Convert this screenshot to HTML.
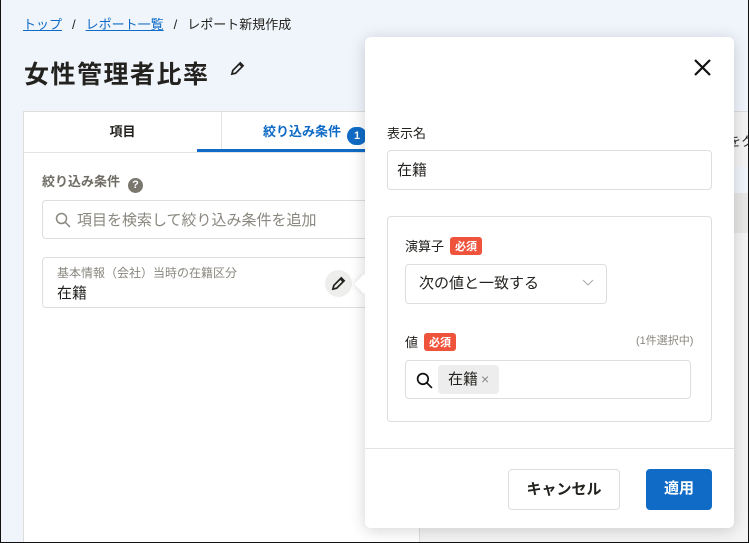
<!DOCTYPE html>
<html style="width:749px;height:543px;overflow:hidden"><head><meta charset="utf-8"><style>
*{box-sizing:border-box;margin:0;padding:0}
body{width:749px;height:543px;overflow:hidden;background:#f0f5fc;font-family:"Liberation Sans","Noto Sans CJK JP",sans-serif;color:#23221e;position:relative}
.frame{position:absolute;left:0;top:0;width:749px;height:543px;border:1px solid #111;border-top:none;pointer-events:none;z-index:50}
.bc{position:absolute;left:23px;top:14px;font-size:13px;color:#23221e;white-space:nowrap}
.bc a{color:#0f6bc5;text-decoration:underline}
.bc span.s{margin:0 10px}
h1{position:absolute;left:24px;top:55px;font-size:25px;font-weight:bold;letter-spacing:1.5px}
.pen{position:absolute}
.left{position:absolute;left:23px;top:111px;width:397px;height:432px;background:#fff;border:1px solid #dedede;border-bottom:none}
.tabs{height:41px;border-bottom:1px solid #e3e3e3;position:relative}
.tab1{position:absolute;left:0;top:0;width:198px;height:40px;text-align:center;line-height:40px;font-weight:bold;font-size:13px;border-right:1px solid #e3e3e3}
.tab2{position:absolute;left:173px;top:0;width:230px;height:40px;line-height:40px;font-weight:bold;font-size:13px;color:#0f6bc5;border-bottom:3px solid #0f6bc5;padding-left:66px}
.badge{display:inline-block;width:20px;height:18px;border-radius:9px;background:#0f6bc5;vertical-align:-3px;margin-left:6px;color:#fff;font-size:11px;line-height:18px;text-align:center}
.sec{position:absolute;left:18px;top:59px;font-size:13px;color:#706d65;font-weight:bold}
.q{display:inline-block;width:15px;height:15px;border-radius:50%;background:#7a776f;color:#fff;font-size:11px;text-align:center;line-height:15px;margin-left:8px;vertical-align:-2px}
.search{position:absolute;left:18px;top:88px;width:370px;height:39px;border:1px solid #dedede;border-radius:4px;font-size:15px;color:#8a877f;line-height:39px;padding-left:34px}
.item{position:absolute;left:18px;top:145px;width:370px;height:51px;border:1px solid #dedede;border-radius:4px;padding:6px 14px}
.item .l{font-size:12px;color:#8a877f}
.item .v{font-size:15px;margin-top:1px}
.pbtn{position:absolute;left:282px;top:12px;width:27px;height:27px;border-radius:50%;background:#eeeeec}
.right{position:absolute;left:420px;top:111px;width:330px;height:432px;background:#f0f5fc}
.pop{position:absolute;left:365px;top:37px;width:369px;height:491px;background:#fff;border-radius:6px;box-shadow:0 2px 16px rgba(0,0,0,.18);z-index:10}
.arrow{position:absolute;left:357px;top:277px;width:14px;height:14px;background:#fff;transform:rotate(45deg);z-index:11;box-shadow:-2px 2px 4px rgba(0,0,0,.06)}
.lbl{position:absolute;font-size:13px;color:#23221e;white-space:nowrap}
.inp{position:absolute;border:1px solid #dedede;border-radius:4px;background:#fff}
.req{display:inline-block;background:#f0533c;color:#fff;font-size:11px;font-weight:bold;padding:1px 5px;border-radius:3px;margin-left:6px;vertical-align:1px}
.btn{position:absolute;height:41px;border-radius:4px;font-size:15px;font-weight:bold;text-align:center;line-height:39px}
</style></head><body>
<div class="bc"><a>トップ</a><span class="s">/</span><a>レポート一覧</a><span class="s">/</span>レポート新規作成</div>
<h1>女性管理者比率</h1>
<svg class="pen" style="left:230px;top:61px" width="15" height="15" viewBox="0 0 16 16"><path d="M2 14l1-4 8-8 3 3-8 8z M10 3l3 3" fill="none" stroke="#23221e" stroke-width="1.8"/></svg>
<div class="right">
<div style="position:absolute;left:0;top:0;width:330px;height:56px;background:#f4f4f4;border-top:1px solid #dedede"></div>
<div style="position:absolute;left:308px;top:20px;font-size:13px;white-space:nowrap">をク</div>
<div style="position:absolute;left:0;top:82px;width:330px;height:40px;background:#e8e8e6"></div>
<div style="position:absolute;left:0;top:122px;width:330px;height:310px;background:#f4f4f4"></div>
</div>
<div class="left">
<div class="tabs"><div class="tab1">項目</div><div class="tab2">絞り込み条件<span class="badge">1</span></div></div>
<div class="sec">絞り込み条件<span class="q">?</span></div>
<div class="search"><svg style="position:absolute;left:12px;top:11px" width="16" height="16" viewBox="0 0 16 16"><circle cx="6.5" cy="6.5" r="5" fill="none" stroke="#8a877f" stroke-width="1.5"/><path d="M10 10l5 5" stroke="#8a877f" stroke-width="1.5"/></svg>項目を検索して絞り込み条件を追加</div>
<div class="item"><div class="l">基本情報（会社）当時の在籍区分</div><div class="v">在籍</div>
<div class="pbtn"><svg style="position:absolute;left:6px;top:6px" width="15" height="15" viewBox="0 0 16 16"><path d="M2 14l1-4 8-8 3 3-8 8z M10 3l3 3" fill="none" stroke="#23221e" stroke-width="1.8"/></svg></div></div>
</div>
<div class="arrow"></div>
<div class="pop">
<svg style="position:absolute;left:329px;top:22px" width="17" height="17" viewBox="0 0 17 17"><path d="M1 1l15 15M16 1L1 16" stroke="#111" stroke-width="2.2"/></svg>
<div class="lbl" style="left:22px;top:86px">表示名</div>
<div class="inp" style="left:22px;top:113px;width:325px;height:40px;font-size:15px;line-height:40px;padding-left:9px">在籍</div>
<div class="inp" style="left:22px;top:179px;width:325px;height:206px"></div>
<div class="lbl" style="left:40px;top:199px">演算子<span class="req">必須</span></div>
<div class="inp" style="left:40px;top:227px;width:202px;height:40px;font-size:15px;line-height:38px;padding-left:13px">次の値と一致する
<svg style="position:absolute;left:176px;top:14px" width="12" height="8" viewBox="0 0 12 8"><path d="M1 1l5 5 5-5" fill="none" stroke="#aaa" stroke-width="1"/></svg></div>
<div class="lbl" style="left:40px;top:295px">値<span class="req">必須</span></div>
<div class="lbl" style="left:271px;top:295px;font-size:11px;color:#8a877f">(1件選択中)</div>
<div class="inp" style="left:40px;top:323px;width:286px;height:39px">
<svg style="position:absolute;left:10px;top:11px" width="17" height="17" viewBox="0 0 16 16"><circle cx="6.5" cy="6.5" r="5" fill="none" stroke="#111" stroke-width="1.6"/><path d="M10 10l5 5" stroke="#111" stroke-width="1.6"/></svg>
<div style="position:absolute;left:32px;top:4px;width:61px;height:29px;background:#ededed;border-radius:4px;font-size:15px;line-height:29px;padding-left:10px;white-space:nowrap">在籍<span style="font-size:14px;color:#888;margin-left:3px">×</span></div></div>
<div style="position:absolute;left:0;top:411px;width:369px;border-top:1px solid #e3e3e3"></div>
<div class="btn" style="left:143px;top:432px;width:112px;border:1px solid #dedede;background:#fff">キャンセル</div>
<div class="btn" style="left:281px;top:432px;width:66px;background:#0f6bc5;color:#fff">適用</div>
</div>
<div class="frame"></div>
</body></html>
